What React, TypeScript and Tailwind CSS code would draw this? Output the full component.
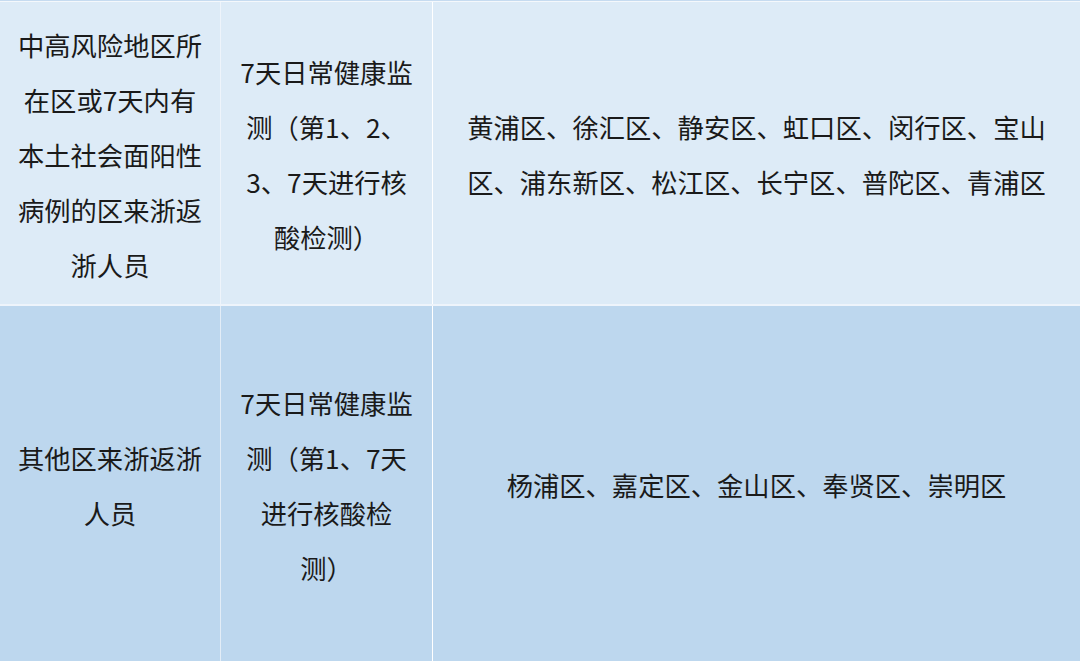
import React from "react";

const font = { fontFamily: '"Noto Sans CJK SC", "Noto Sans", sans-serif' };

function Lines({ lines }: { lines: string[] }) {
  return (
    <div className="flex flex-col items-center">
      {lines.map((l, i) => (
        <div key={i} className="whitespace-nowrap leading-[55px]">
          {l}
        </div>
      ))}
    </div>
  );
}

export default function App() {
  return (
    <div
      className="w-[1080px] h-[661px] overflow-hidden bg-white flex flex-col text-[26.3px] text-[#1a1a1a]"
      style={font}
    >
      <div className="h-px bg-[#c6dbf0]" />
      <div className="h-px bg-[#f4f8fc]" />
      <div className="h-[302px] flex bg-[#ddebf7]">
        <div className="w-[220px] flex items-center justify-center pt-[2px]">
          <Lines lines={["中高风险地区所", "在区或7天内有", "本土社会面阳性", "病例的区来浙返", "浙人员"]} />
        </div>
        <div className="w-px bg-[#eef4fb]" />
        <div className="w-[211px] flex items-center justify-center pt-[2px]">
          <Lines lines={["7天日常健康监", "测（第1、2、", "3、7天进行核", "酸检测）"]} />
        </div>
        <div className="w-px bg-white" />
        <div className="flex-1 flex items-center justify-center pt-[1px]">
          <Lines
            lines={[
              "黄浦区、徐汇区、静安区、虹口区、闵行区、宝山",
              "区、浦东新区、松江区、长宁区、普陀区、青浦区",
            ]}
          />
        </div>
      </div>
      <div className="h-[2px] bg-[#eef4fb]" />
      <div className="flex-1 flex bg-[#bdd7ee]">
        <div className="w-[220px] flex items-center justify-center pt-[3px]">
          <Lines lines={["其他区来浙返浙", "人员"]} />
        </div>
        <div className="w-px bg-[#e3edf7]" />
        <div className="w-[211px] flex items-center justify-center pt-[3px]">
          <Lines lines={["7天日常健康监", "测（第1、7天", "进行核酸检", "测）"]} />
        </div>
        <div className="w-px bg-white" />
        <div className="flex-1 flex items-center justify-center pt-[1px]">
          <Lines lines={["杨浦区、嘉定区、金山区、奉贤区、崇明区"]} />
        </div>
      </div>
    </div>
  );
}
